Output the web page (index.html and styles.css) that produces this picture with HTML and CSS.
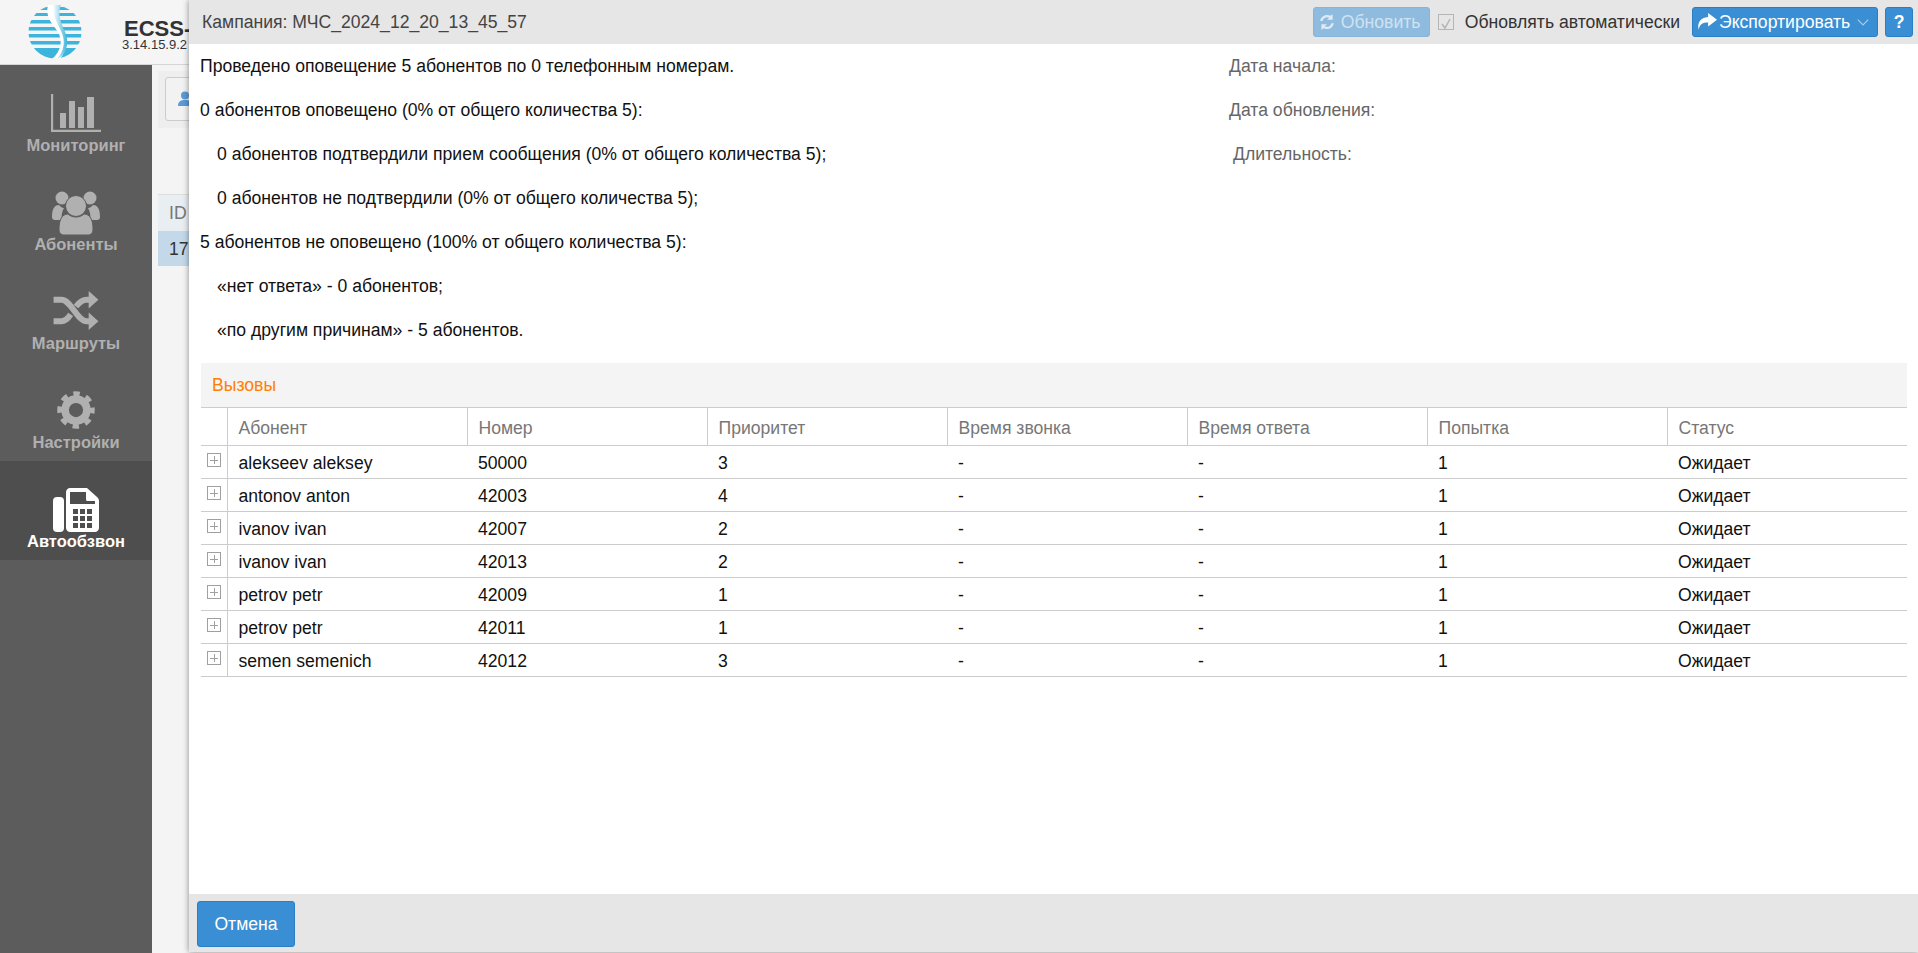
FILE: index.html
```html
<!DOCTYPE html>
<html lang="ru">
<head>
  <meta charset="UTF-8">
  <title>ECSS-10</title>
  <link rel="stylesheet" href="styles.css">
</head>
<body>

<div class="app">
  <div class="topbar">
    <svg class="logo" viewBox="0 0 54 54">
      <defs>
        <clipPath id="disc"><circle cx="27" cy="27" r="26.500"/></clipPath>
        <linearGradient id="spine" x1="0" y1="0" x2="1" y2="0">
          <stop offset="0" stop-color="#ffffff"/>
          <stop offset="1" stop-color="#3db4dc"/>
        </linearGradient>
      </defs>
      <g clip-path="url(#disc)" fill="#3db4dc">
        <rect x="0" y="2" width="54" height="3"/>
        <rect x="0" y="8" width="54" height="3"/>
        <rect x="0" y="15" width="54" height="3.500"/>
        <rect x="0" y="22" width="54" height="3.500"/>
        <rect x="0" y="29" width="54" height="3.500"/>
        <rect x="0" y="36" width="54" height="3.500"/>
        <rect x="0" y="43" width="54" height="11"/>
      </g>
      <path d="M20 0C17 12 24 18 30 27C35 36 33 46 24 54L32 54C40 44 40 33 34 24C29 16 26 9 26 0Z" fill="#fff"/>
      <path d="M25 0C24 10 29 17 33 26C38 36 36 46 29 54C38 50 42 38 37 27C33 18 29 9 33 0Z" fill="url(#spine)"/>
    </svg>
    <div class="title-block">
      <div class="product">ECSS-10</div>
      <div class="version">3.14.15.9.2</div>
    </div>
  </div>

  <div class="main">
    <nav class="menu">
      <a class="item">
        <svg class="ico" width="50" height="38" viewBox="0 0 50 38">
          <path d="M1 0V37H50" fill="none" stroke="#b0b0b0" stroke-width="2.400"/>
          <rect x="9" y="19" width="6" height="15" fill="#b0b0b0"/>
          <rect x="18" y="7" width="6" height="27" fill="#b0b0b0"/>
          <rect x="27" y="13" width="6" height="21" fill="#b0b0b0"/>
          <rect x="36" y="3" width="7" height="31" fill="#b0b0b0"/>
        </svg>
        <span>Мониторинг</span>
      </a>
      <a class="item">
        <svg class="ico tall" width="48" height="44" viewBox="0 0 48 44">
          <g fill="#b0b0b0">
            <circle cx="10" cy="7" r="6.500"/>
            <circle cx="38" cy="7" r="6.500"/>
            <path d="M0 26C0 17 3 14 7 14C9 16 10 17 12 17C10 21 9 24 10 29H3C1 29 0 28 0 26Z"/>
            <path d="M48 26C48 17 45 14 41 14C39 16 38 17 36 17C38 21 39 24 38 29H45C47 29 48 28 48 26Z"/>
            <circle cx="24" cy="15" r="10.500" stroke="#5c5c5c" stroke-width="1"/>
            <path d="M7 38C7 29 10 23 16 23C20 27 28 27 32 23C38 23 41 29 41 38C41 42 39 44 36 44H12C9 44 7 42 7 38Z" stroke="#5c5c5c" stroke-width="1"/>
          </g>
        </svg>
        <span>Абоненты</span>
      </a>
      <a class="item">
        <svg class="ico" width="46" height="39" viewBox="0 0 46 40">
          <path d="M0 9H8C18 9 24 31 34 31H38M0 31H8C12 31 15 28 17.500 24M23 16C26 12 29 9 34 9H38" fill="none" stroke="#b0b0b0" stroke-width="6"/>
          <path d="M36 0L46 9L36 18ZM36 22L46 31L36 40Z" fill="#b0b0b0"/>
        </svg>
        <span>Маршруты</span>
      </a>
      <a class="item">
        <svg class="ico" width="38" height="38" viewBox="0 0 40 40">
          <circle cx="20" cy="20" r="16.500" fill="none" stroke="#b0b0b0" stroke-width="6.500" stroke-dasharray="6.500 6.460" stroke-dashoffset="3.200"/>
          <circle cx="20" cy="20" r="11.500" fill="none" stroke="#b0b0b0" stroke-width="8"/>
        </svg>
        <span>Настройки</span>
      </a>
      <a class="item active">
        <svg class="ico tall" width="46" height="44" viewBox="0 0 46 44">
          <rect x="0" y="9" width="11" height="35" rx="4" fill="#fff"/>
          <path d="M13 4C13 2 15 0 17 0H34L44 9C45 10 46 11 46 13V40C46 42 44 44 42 44H17C15 44 13 42 13 40Z" fill="#fff"/>
          <path d="M17 4H33V11C33 13 34 13 35 13H42V16H17Z" fill="#4e4e4e"/>
          <g fill="#4e4e4e">
            <rect x="20" y="21" width="5" height="5"/><rect x="27" y="21" width="5" height="5"/><rect x="34" y="21" width="5" height="5"/>
            <rect x="20" y="28" width="5" height="5"/><rect x="27" y="28" width="5" height="5"/><rect x="34" y="28" width="5" height="5"/>
            <rect x="20" y="35" width="5" height="5"/><rect x="27" y="35" width="5" height="5"/><rect x="34" y="35" width="5" height="5"/>
          </g>
        </svg>
        <span>Автообзвон</span>
      </a>
    </nav>

    <div class="content">
      <div class="tools">
        <div class="tool-btn">
          <svg width="14" height="16" viewBox="0 0 14 16"><circle cx="7" cy="4.500" r="4" fill="#5b9bd5"/><path d="M0 15C0 10 3 9 7 9S14 10 14 15Z" fill="#5b9bd5"/></svg>
        </div>
      </div>
      <table class="bg-table">
        <tr><th>ID</th></tr>
        <tr class="sel"><td>17</td></tr>
      </table>
    </div>
  </div>
</div>

<!-- окно кампании -->
<div class="modal">
  <div class="modal-head">
    <div class="modal-title">Кампания: МЧС_2024_12_20_13_45_57</div>
    <button class="btn disabled">
      <svg width="18" height="18" viewBox="0 0 16 16"><path d="M2 7C2.500 3 7 0.500 11 2.500L13 1V6H8L10 4.200C7.500 3 5 4 4 7ZM14 9C13.500 13 9 15.500 5 13.500L3 15V10H8L6 11.800C8.500 13 11 12 12 9Z" fill="#dfeaf5"/></svg>
      Обновить
    </button>
    <label class="auto"><span class="check"><svg width="14" height="14" viewBox="0 0 14 14"><path d="M3 7L6 11L11 2" fill="none" stroke="#b5b5b5" stroke-width="1.500"/></svg></span>Обновлять автоматически</label>
    <button class="btn export">
      <svg width="20" height="18" viewBox="0 0 18 16"><path d="M10 0L18 6L10 12V8.500C5 8.500 2.500 10 1.500 15C0 9 3 4 10 3.500Z" fill="#fff"/></svg>
      Экспортировать
      <svg class="caret" width="12" height="7" viewBox="0 0 10 6"><path d="M0.500 0.500L5 5L9.500 0.500" fill="none" stroke="#a9cdec" stroke-width="1"/></svg>
    </button>
    <button class="btn help">?</button>
  </div>

  <div class="modal-body">
    <div class="summary">
      <div class="report">
        <p>Проведено оповещение 5 абонентов по 0 телефонным номерам.</p>
        <p>0 абонентов оповещено (0% от общего количества 5):</p>
        <p class="sub">0 абонентов подтвердили прием сообщения (0% от общего количества 5);</p>
        <p class="sub">0 абонентов не подтвердили (0% от общего количества 5);</p>
        <p>5 абонентов не оповещено (100% от общего количества 5):</p>
        <p class="sub">«нет ответа» - 0 абонентов;</p>
        <p class="sub">«по другим причинам» - 5 абонентов.</p>
      </div>
      <div class="dates">
        <p>Дата начала:</p>
        <p>Дата обновления:</p>
        <p class="shift">Длительность:</p>
      </div>
    </div>

    <div class="calls">
      <div class="calls-title">Вызовы</div>
      <table class="calls-table">
        <thead>
          <tr><th class="exp"></th><th>Абонент</th><th>Номер</th><th>Приоритет</th><th>Время звонка</th><th>Время ответа</th><th>Попытка</th><th>Статус</th></tr>
        </thead>
        <tbody>
          <tr><td class="exp"><i class="plus"></i></td><td>alekseev aleksey</td><td>50000</td><td>3</td><td>-</td><td>-</td><td>1</td><td>Ожидает</td></tr>
          <tr><td class="exp"><i class="plus"></i></td><td>antonov anton</td><td>42003</td><td>4</td><td>-</td><td>-</td><td>1</td><td>Ожидает</td></tr>
          <tr><td class="exp"><i class="plus"></i></td><td>ivanov ivan</td><td>42007</td><td>2</td><td>-</td><td>-</td><td>1</td><td>Ожидает</td></tr>
          <tr><td class="exp"><i class="plus"></i></td><td>ivanov ivan</td><td>42013</td><td>2</td><td>-</td><td>-</td><td>1</td><td>Ожидает</td></tr>
          <tr><td class="exp"><i class="plus"></i></td><td>petrov petr</td><td>42009</td><td>1</td><td>-</td><td>-</td><td>1</td><td>Ожидает</td></tr>
          <tr><td class="exp"><i class="plus"></i></td><td>petrov petr</td><td>42011</td><td>1</td><td>-</td><td>-</td><td>1</td><td>Ожидает</td></tr>
          <tr><td class="exp"><i class="plus"></i></td><td>semen semenich</td><td>42012</td><td>3</td><td>-</td><td>-</td><td>1</td><td>Ожидает</td></tr>
        </tbody>
      </table>
    </div>
  </div>

  <div class="modal-foot">
    <button class="btn cancel">Отмена</button>
  </div>
</div>

</body>
</html>
```

FILE: styles.css
```css
html, body {
  height: 100%;
}
body {
  margin: 0;
  font-family: "Liberation Sans", Arial, sans-serif;
  font-size: 17.6px;
  overflow: hidden;
  background: #f4f4f4;
}
.app {
  display: flex;
  flex-direction: column;
  height: 953px;
}
.topbar {
  height: 64px;
  flex-shrink: 0;
  background: #f5f5f5;
  border-bottom: 1px solid #d5d5d5;
  display: flex;
  align-items: center;
  padding-left: 28px;
  color: #333;
}
.logo {
  width: 54px;
  height: 54px;
}
.title-block {
  margin-left: 40px;
  padding-top: 5px;
}
.product {
  font-size: 22px;
  font-weight: bold;
  line-height: 20px;
  margin-left: 2px;
}
.version {
  font-size: 13px;
  line-height: 11px;
}
.main {
  flex: 1;
  display: flex;
}
.menu {
  width: 152px;
  flex-shrink: 0;
  background: #5c5c5c;
}
.item {
  height: 99px;
  display: flex;
  flex-direction: column;
  align-items: center;
  justify-content: flex-end;
  padding-bottom: 9px;
  box-sizing: border-box;
  color: #b0b0b0;
  font-weight: bold;
  font-size: 16.500px;
  line-height: 19px;
}
.item .ico {
  margin-bottom: 4px;
}
.item .ico.tall {
  margin-bottom: 0;
}
.item.active {
  background: #4e4e4e;
  color: #fff;
}
.content {
  flex: 1;
  padding: 6px;
}
.tools {
  height: 57px;
  background: #eeeeee;
  padding: 6px 7px;
  box-sizing: border-box;
}
.tool-btn {
  width: 60px;
  height: 44px;
  box-sizing: border-box;
  background: #f2f2f2;
  border: 1px solid #ccc;
  border-radius: 3px;
  display: flex;
  align-items: center;
  padding-left: 12px;
}
.bg-table {
  margin-top: 66px;
  border-collapse: collapse;
  width: 100%;
  color: #333;
}
.bg-table th {
  background: #e9eef2;
  border-top: 1px solid #ddd;
  height: 36px;
  box-sizing: border-box;
  font-weight: normal;
  color: #777;
  text-align: left;
  padding: 2px 0 0 11px;
}
.bg-table td {
  background: #c3d9ea;
  height: 35px;
  box-sizing: border-box;
  padding: 2px 0 0 11px;
}
.modal {
  position: absolute;
  left: 189px;
  top: 0;
  right: 0;
  height: 952px;
  background: #fff;
  box-shadow: 0 0 6px rgba(0, 0, 0, 0.45);
  display: flex;
  flex-direction: column;
}
.modal-head {
  height: 44px;
  flex-shrink: 0;
  background: #e6e6e6;
  display: flex;
  align-items: center;
  padding: 0 5px 0 13px;
  color: #444;
}
.modal-title {
  flex: 1;
}
.btn {
  font-family: inherit;
  font-size: 17.6px;
  color: #fff;
  background: #3a8fd4;
  border: 1px solid #2a7fc4;
  border-radius: 3px;
  height: 30px;
  padding: 0 6px 0 4px;
  display: flex;
  align-items: center;
  gap: 5px;
}
.btn.disabled {
  background: #8fbbdf;
  border-color: #86b4da;
  color: #cfe2f2;
  width: 117px;
}
.btn.export {
  gap: 2px;
  width: 186px;
}
.btn.help {
  width: 28px;
  margin-left: 7px;
  padding: 0;
  justify-content: center;
  font-weight: bold;
}
.caret {
  margin-left: 5px;
}
.auto {
  display: flex;
  align-items: center;
  margin: 0 12px 0 8px;
  color: #333;
}
.check {
  width: 14px;
  height: 14px;
  border: 1px solid #b5b5b5;
  margin-right: 11px;
  display: block;
}
.modal-body {
  flex: 1;
  padding: 0 11px 0 11px;
}
.summary {
  display: flex;
}
.report {
  width: 1029px;
}
.report p, .dates p {
  margin: 0;
  height: 44px;
  line-height: 44px;
  color: #111;
}
.report .sub {
  padding-left: 17px;
}
.dates p {
  color: #666;
}
.dates .shift {
  padding-left: 4px;
}
.calls {
  margin: 11px 0 0 1px;
}
.calls-title {
  height: 44px;
  line-height: 45px;
  background: #f4f4f4;
  border-bottom: 1px solid #ccc;
  padding-left: 11px;
  color: #ff8000;
}
.calls-table {
  border-collapse: collapse;
  table-layout: fixed;
  width: 1706px;
}
.calls-table th {
  height: 37px;
  box-sizing: border-box;
  font-weight: normal;
  color: #777;
  text-align: left;
  padding: 4px 0 0 11px;
  border-left: 1px solid #ccc;
  border-bottom: 1px solid #ccc;
  width: 240px;
}
.calls-table td {
  height: 33px;
  box-sizing: border-box;
  padding: 4px 0 0 11px;
  color: #111;
  border-bottom: 1px solid #ccc;
}
.calls-table .exp {
  width: 26px;
  padding: 0;
  border-left: 0;
}
.calls-table td.exp {
  border-right: 1px solid #ccc;
}
.plus {
  display: block;
  width: 12px;
  height: 12px;
  border: 1px solid #a0a0a0;
  margin: -3px 0 0 6px;
  background: linear-gradient(#a0a0a0, #a0a0a0) center / 8px 1px no-repeat, linear-gradient(#a0a0a0, #a0a0a0) center / 1px 8px no-repeat;
}
.modal-foot {
  height: 58px;
  flex-shrink: 0;
  background: #e6e6e6;
  padding: 7px 8px;
  box-sizing: border-box;
}
.btn.cancel {
  height: 46px;
  width: 98px;
  justify-content: center;
  padding: 0;
}
```
